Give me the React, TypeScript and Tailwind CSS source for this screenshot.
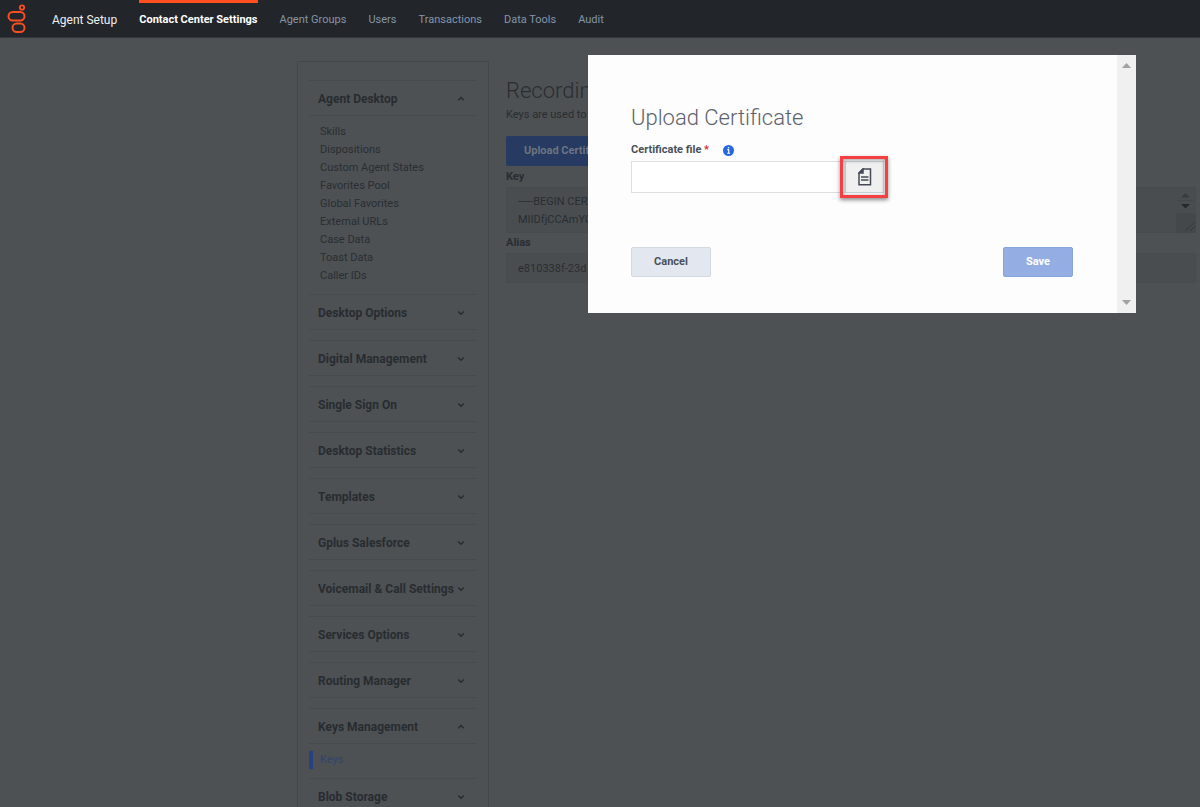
import { useState } from "react";

type Section = {
  title: string;
  items?: string[];
};

const NAV_LINKS = ["Agent Groups", "Users", "Transactions", "Data Tools", "Audit"];

const SECTIONS: Section[] = [
  {
    title: "Agent Desktop",
    items: [
      "Skills",
      "Dispositions",
      "Custom Agent States",
      "Favorites Pool",
      "Global Favorites",
      "External URLs",
      "Case Data",
      "Toast Data",
      "Caller IDs",
    ],
  },
  { title: "Desktop Options" },
  { title: "Digital Management" },
  { title: "Single Sign On" },
  { title: "Desktop Statistics" },
  { title: "Templates" },
  { title: "Gplus Salesforce" },
  { title: "Voicemail & Call Settings" },
  { title: "Services Options" },
  { title: "Routing Manager" },
  { title: "Keys Management", items: ["Keys"] },
  { title: "Blob Storage" },
];

function Logo() {
  return (
    <svg width="20" height="30" viewBox="0 0 20 30" fill="none" stroke="#f94f21" strokeWidth="2" aria-hidden="true">
      <circle cx="15" cy="3.5" r="2.2" strokeWidth="1.8" />
      <rect x="1.5" y="8" width="16" height="8.5" rx="4.2" />
      <rect x="5.5" y="19.5" width="12" height="8.5" rx="4.2" />
    </svg>
  );
}

function Chevron({ up }: { up?: boolean }) {
  return (
    <svg width="8" height="6" viewBox="0 0 8 6" fill="none" stroke="#282c30" strokeWidth="1.4" aria-hidden="true">
      <path d={up ? "M1.2 4.3 4 1.5 6.8 4.3" : "M1.2 1.5 4 4.3 6.8 1.5"} />
    </svg>
  );
}

function TopBar() {
  return (
    <header className="flex h-[38px] shrink-0 items-center border-b border-[#34383c] bg-[#222529] text-[11px]">
      <a href="#home" className="ml-[7px] w-[45px]" aria-label="Home">
        <Logo />
      </a>
      <a href="#setup" className="pt-[2px] text-xs text-[#eef0f2]">
        Agent Setup
      </a>
      <nav className="ml-[22px] flex h-full gap-[22px] text-[#8296aa]">
        <a href="#settings" className="flex items-center border-t-3 border-[#ff4f1f] font-bold text-white">
          Contact Center Settings
        </a>
        {NAV_LINKS.map((link) => (
          <a key={link} href="#nav" className="flex items-center pt-[3px]">
            {link}
          </a>
        ))}
      </nav>
    </header>
  );
}

function Sidebar() {
  return (
    <aside className="flex w-48 shrink-0 flex-col gap-[10px] self-start border border-[#43474b] px-[11px] pt-[18px] pb-8">
      {SECTIONS.map(({ title, items }) => (
        <section key={title}>
          <h2 className="border-y border-[#474b4f]">
            <button
              type="button"
              className="flex h-[34px] w-full items-center justify-between pt-px pr-3 pl-[9px] text-xs font-bold whitespace-nowrap text-[#282c30]"
            >
              {title}
              <Chevron up={!!items} />
            </button>
          </h2>
          {items && (
            <ul className="-mb-px pt-[7px] text-[11px] leading-[18px] text-[#2a2e32]">
              {items.map((item) => (
                <li key={item}>
                  <a
                    href="#item"
                    className={
                      item === "Keys"
                        ? "block border-l-4 border-[#28417f] pl-[7px] text-[#31446f]"
                        : "block border-l-4 border-transparent pl-[7px]"
                    }
                  >
                    {item}
                  </a>
                </li>
              ))}
            </ul>
          )}
        </section>
      ))}
    </aside>
  );
}

function RecordingKeys() {
  return (
    <main className="ml-[17px] min-w-0 flex-1 pt-[15px] pr-1 text-[11px] text-[#292d31]">
      <h1 className="text-[22px] leading-[30px] font-light">Recording</h1>
      <p className="leading-[18px]">Keys are used to</p>
      <button type="button" className="mt-3 block h-[30px] rounded-xs bg-[#263a62] px-[18px] font-bold text-[#6d7481]">
        Upload Certificate
      </button>
      <label htmlFor="key" className="block pt-px leading-5 font-bold">
        Key
      </label>
      <div className="relative">
        <textarea
          id="key"
          readOnly
          className="block h-[46px] w-full resize-none overflow-hidden rounded-xs border border-[#474b4e] bg-[#494d50] px-[11px] py-[5px] leading-[18px]"
          defaultValue={"-----BEGIN CERT\nMIIDfjCCAmYC"}
        />
        <svg className="absolute top-0 right-0" width="20" height="46" viewBox="0 0 20 46" aria-hidden="true">
          <path d="M0 26h20v20H0z" fill="#44484b" />
          <path d="M5 10.5 9.5 6 14 10.5z" fill="#383c3f" />
          <path d="M2 13.5h16" stroke="#424649" />
          <path d="M5 17 9.5 21.5 14 17z" fill="#25292c" />
          <path d="m9 44 10-9M14 44l5-5" stroke="#33373a" />
        </svg>
      </div>
      <label htmlFor="alias" className="block leading-5 font-bold">
        Alias
      </label>
      <input
        id="alias"
        readOnly
        className="block h-[30px] w-full rounded-xs border border-[#474b4e] bg-[#494d50] px-[11px]"
        defaultValue="e810338f-23d"
      />
    </main>
  );
}

function UploadDialog() {
  const [fileName, setFileName] = useState("");

  return (
    <div className="fixed inset-0 flex items-start justify-end pt-[55px] pr-16">
      <div role="dialog" aria-labelledby="dialog-title" className="flex w-[548px] bg-[#fdfdfd] text-[11px] text-[#4a505a]">
        <form className="flex-1 pt-12 pr-11 pb-9 pl-[43px]">
          <h2 id="dialog-title" className="text-[22px] leading-[30px] font-light text-[#5c626b]">
            Upload Certificate
          </h2>
          <div className="flex h-7 items-center pt-[6px]">
            <label htmlFor="certificate" className="font-bold">
              Certificate file <span className="text-[#cf2a35]">*</span>
            </label>
            <svg className="ml-[14px]" width="11" height="11" viewBox="0 0 11 11" role="img" aria-label="Info">
              <circle cx="5.5" cy="5.5" r="5.5" fill="#2467e3" />
              <path d="M4.3 4.6h1.4v3.7M4.2 8.3h2.9" stroke="#fff" strokeWidth="1.1" fill="none" />
              <circle cx="5.5" cy="2.7" r=".8" fill="#fff" />
            </svg>
          </div>
          <div className="relative flex h-8 w-[253px]">
            <input
              id="certificate"
              value={fileName}
              onChange={(e) => setFileName(e.target.value)}
              className="w-[214px] border border-[#dcdfe2] bg-white px-3"
            />
            <button type="button" aria-label="Browse" className="flex flex-1 items-center justify-center border border-[#cdd5dc] bg-[#f0f0f0]">
              <svg width="14" height="18" viewBox="0 0 14 18" fill="none" stroke="#444a55" strokeWidth="1.5">
                <path d="M5 1h7.5v15.8H1V5z" />
                <path d="M1 5h4V1z" fill="#444a55" />
                <path d="M3 9h7.5M3 12h7.5" />
              </svg>
            </button>
            <div className="pointer-events-none absolute -top-[5px] -right-1 -bottom-[5px] w-12 border-3 border-[#f53f40] shadow-[0_2px_4px_rgba(0,0,0,0.45),inset_0_1px_4px_rgba(0,0,0,0.4)]" />
          </div>
          <div className="mt-[54px] flex justify-between">
            <button type="button" className="h-[30px] w-20 rounded-xs border border-[#d3d9e2] bg-[#e3e8f0] font-bold">
              Cancel
            </button>
            <button type="submit" className="h-[30px] w-[70px] rounded-xs border border-[#88a4de] bg-[#94aee4] font-bold text-white">
              Save
            </button>
          </div>
        </form>
        <div className="flex w-[19px] flex-col items-center justify-between bg-[#f0f0f0] py-2">
          <svg width="9" height="5" viewBox="0 0 9 5" fill="#a2a2a2" aria-hidden="true">
            <path d="M0 5 4.5 0 9 5z" />
          </svg>
          <svg width="9" height="5" viewBox="0 0 9 5" fill="#a2a2a2" aria-hidden="true">
            <path d="M0 0 4.5 5 9 0z" />
          </svg>
        </div>
      </div>
    </div>
  );
}

export default function App() {
  return (
    <div className="flex h-screen flex-col overflow-hidden bg-[#4d5154] font-['Roboto',sans-serif]">
      <TopBar />
      <div className="flex flex-1 pt-[23px] pl-[297px]">
        <Sidebar />
        <RecordingKeys />
      </div>
      <UploadDialog />
    </div>
  );
}
